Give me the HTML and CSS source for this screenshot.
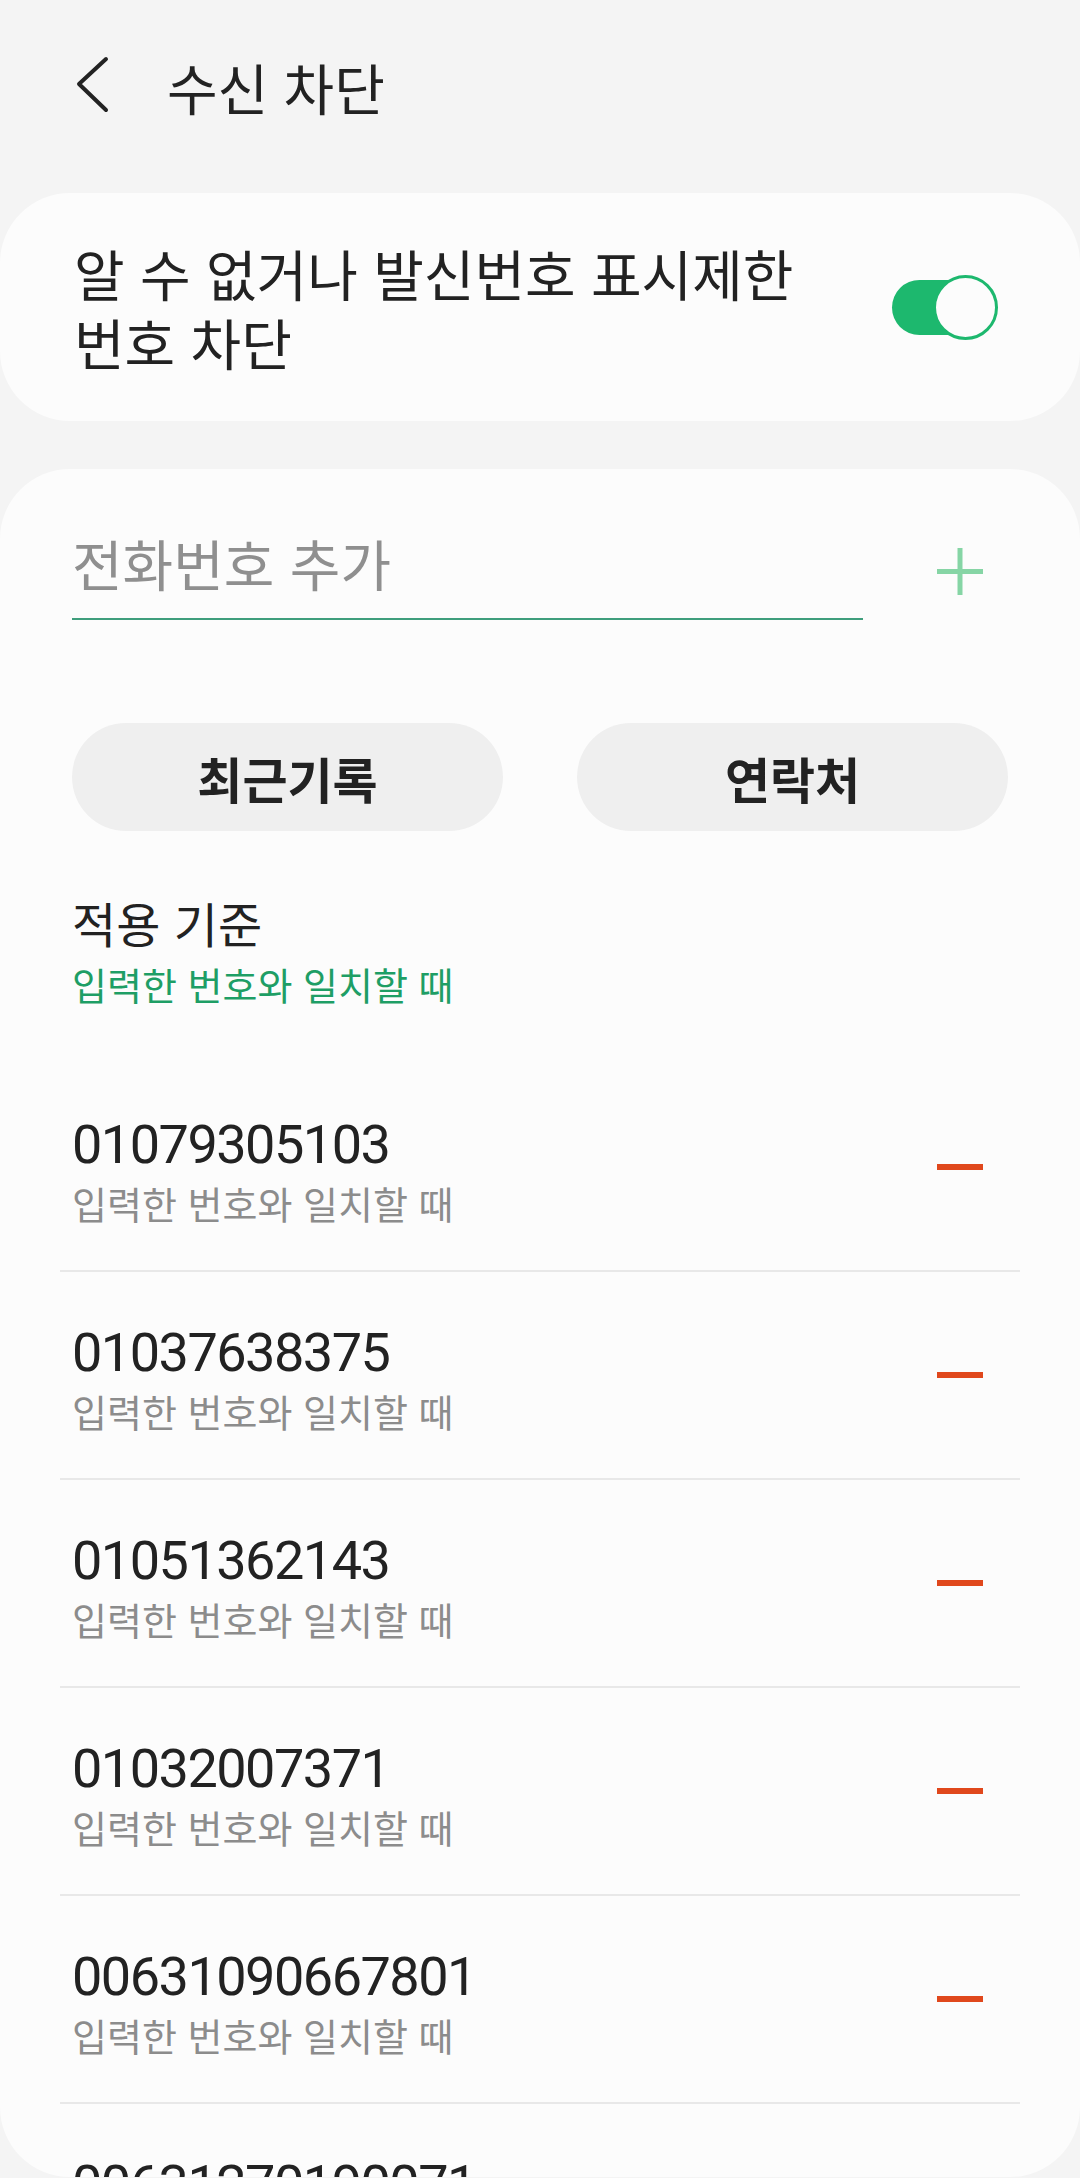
FILE: index.html
```html
<!DOCTYPE html>
<html lang="ko">
<head>
    <meta charset="UTF-8">
    <meta name="viewport" content="width=device-width, initial-scale=1.0">
    <title>수신 차단</title>
    <link rel="stylesheet" href="styles.css">
</head>
<body>

<!-- Top bar -->
<div class="header">
    <svg class="back" width="40" height="60" viewBox="0 0 40 60">
        <path d="M36 3 L9 28 L36 54" fill="none" stroke="#222" stroke-width="4" stroke-linecap="round" stroke-linejoin="round"/>
    </svg>
    <span class="title">수신 차단</span>
</div>

<!-- Unknown numbers switch -->
<div class="card switch-card">
    <div class="switch-label">알 수 없거나 발신번호 표시제한 번호 차단</div>
    <div class="toggle">
        <span class="track"></span>
        <span class="thumb"></span>
    </div>
</div>

<!-- Blocked numbers -->
<div class="card list-card">
    <div class="add-row">
        <input type="text" class="phone-input" placeholder="전화번호 추가">
        <svg class="plus" width="46" height="47" viewBox="0 0 46 47">
            <path d="M23 0 V47 M0 23.5 H46" stroke="#86d5a5" stroke-width="5"/>
        </svg>
    </div>

    <div class="buttons">
        <button class="pick">최근기록</button>
        <button class="pick">연락처</button>
    </div>

    <div class="rule">
        <div class="rule-title">적용 기준</div>
        <div class="rule-value">입력한 번호와 일치할 때</div>
    </div>

    <div class="list">
        <div class="row">
            <div class="info">
                <div class="number">01079305103</div>
                <div class="match">입력한 번호와 일치할 때</div>
            </div>
            <span class="minus"></span>
        </div>
        <div class="row">
            <div class="info">
                <div class="number">01037638375</div>
                <div class="match">입력한 번호와 일치할 때</div>
            </div>
            <span class="minus"></span>
        </div>
        <div class="row">
            <div class="info">
                <div class="number">01051362143</div>
                <div class="match">입력한 번호와 일치할 때</div>
            </div>
            <span class="minus"></span>
        </div>
        <div class="row">
            <div class="info">
                <div class="number">01032007371</div>
                <div class="match">입력한 번호와 일치할 때</div>
            </div>
            <span class="minus"></span>
        </div>
        <div class="row">
            <div class="info">
                <div class="number">00631090667801</div>
                <div class="match">입력한 번호와 일치할 때</div>
            </div>
            <span class="minus"></span>
        </div>
        <div class="row">
            <div class="info">
                <div class="number">00631270190071</div>
                <div class="match">입력한 번호와 일치할 때</div>
            </div>
            <span class="minus"></span>
        </div>
    </div>
</div>

</body>
</html>
```

FILE: styles.css
```css
body {
    margin: 0;
    height: 2178px;
    overflow: hidden;
    background-color: #f4f4f4;
    font-family: "Noto Sans CJK KR", "Noto Sans", sans-serif;
    color: #222;
    word-break: keep-all;
}
.header {
    display: flex;
    align-items: center;
    height: 172px;
    padding-left: 70px;
}
.title {
    margin-left: 57px;
    font-size: 55px;
}
.card {
    background-color: #fcfcfc;
    border-radius: 70px;
}
.switch-card {
    display: flex;
    justify-content: space-between;
    align-items: center;
    margin-top: 21px;
    padding: 45px 82px 45px 74px;
}
.switch-label {
    width: 780px;
    font-size: 55px;
    line-height: 69px;
}
.toggle {
    position: relative;
    width: 106px;
    height: 65px;
}
.track {
    position: absolute;
    left: 0;
    top: 5px;
    width: 96px;
    height: 55px;
    border-radius: 28px;
    background-color: #1db86e;
}
.thumb {
    position: absolute;
    right: 0;
    top: 0;
    width: 65px;
    height: 65px;
    box-sizing: border-box;
    border: 3px solid #1db86e;
    border-radius: 50%;
    background-color: #fcfcfc;
}
.list-card {
    margin-top: 48px;
    height: 1708px;
    overflow: hidden;
    padding-top: 36px;
    box-sizing: border-box;
}
.add-row {
    display: flex;
    align-items: flex-end;
    padding: 0 72px;
}
.phone-input {
    width: 791px;
    height: 115px;
    box-sizing: border-box;
    padding: 0;
    border: none;
    border-bottom: 2px solid #3f9e7c;
    background: transparent;
    font-family: "Noto Sans CJK KR", sans-serif;
    font-size: 55px;
    color: #222;
    outline: none;
}
.phone-input::placeholder {
    color: #8f8f8f;
}
.plus {
    margin-left: 74px;
    margin-bottom: 25px;
}
.buttons {
    display: flex;
    gap: 74px;
    margin-top: 103px;
    padding: 0 72px;
}
.pick {
    flex: 1;
    height: 108px;
    border: none;
    border-radius: 54px;
    background-color: #efefef;
    font-family: "Noto Sans CJK KR", sans-serif;
    font-size: 49px;
    font-weight: bold;
    color: #222;
}
.rule {
    margin-top: 61px;
    padding-left: 72px;
}
.rule-title {
    font-size: 48px;
    line-height: 60px;
}
.rule-value {
    margin-top: 8px;
    font-size: 38px;
    line-height: 48px;
    color: #1e9e65;
}
.list {
    margin-top: 56px;
}
.row {
    display: flex;
    justify-content: space-between;
    align-items: center;
    height: 206px;
    margin: 0 60px;
    padding: 0 37px 0 12px;
    border-bottom: 2px solid #e8e8e8;
}
.info {
    align-self: flex-start;
    padding-top: 51px;
}
.number {
    font-family: Roboto, sans-serif;
    font-size: 54px;
    line-height: 60px;
    letter-spacing: -1.5px;
    color: #222;
}
.match {
    margin-top: 4px;
    font-size: 38px;
    line-height: 48px;
    color: #8c8c8c;
}
.minus {
    width: 46px;
    height: 6px;
    background-color: #e0481c;
}
```
